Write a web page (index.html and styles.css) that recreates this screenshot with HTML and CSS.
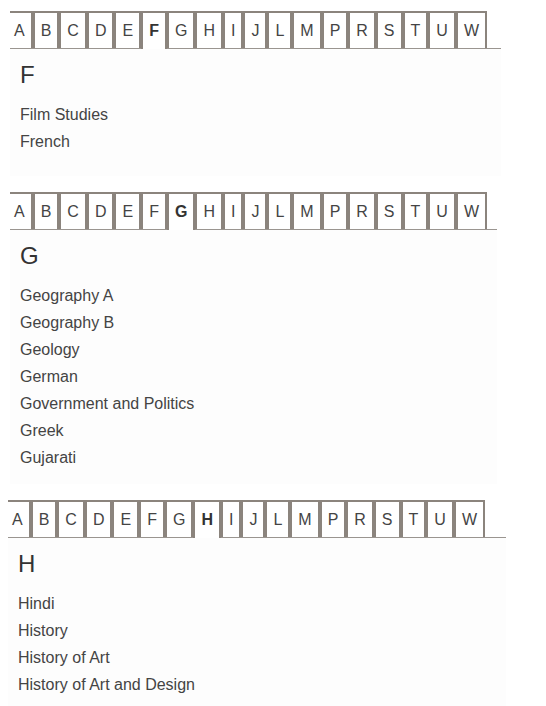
FILE: index.html
```html
<!DOCTYPE html>
<html lang="en">
<head>
    <meta charset="UTF-8">
    <meta name="viewport" content="width=device-width, initial-scale=1.0">
    <title>Subjects A-Z</title>
    <link rel="stylesheet" href="styles.css">
</head>
<body>

    <section class="letter-block block-f">
        <ul class="tabs">
            <li class="tab">A</li><li class="tab">B</li><li class="tab">C</li><li class="tab">D</li><li class="tab">E</li><li class="tab active">F</li><li class="tab">G</li><li class="tab">H</li><li class="tab">I</li><li class="tab">J</li><li class="tab">L</li><li class="tab">M</li><li class="tab">P</li><li class="tab">R</li><li class="tab">S</li><li class="tab">T</li><li class="tab">U</li><li class="tab">W</li>
        </ul>
        <div class="panel">
            <h2>F</h2>
            <ul class="subjects">
                <li>Film Studies</li>
                <li>French</li>
            </ul>
        </div>
    </section>

    <section class="letter-block block-g">
        <ul class="tabs">
            <li class="tab">A</li><li class="tab">B</li><li class="tab">C</li><li class="tab">D</li><li class="tab">E</li><li class="tab">F</li><li class="tab active">G</li><li class="tab">H</li><li class="tab">I</li><li class="tab">J</li><li class="tab">L</li><li class="tab">M</li><li class="tab">P</li><li class="tab">R</li><li class="tab">S</li><li class="tab">T</li><li class="tab">U</li><li class="tab">W</li>
        </ul>
        <div class="panel">
            <h2>G</h2>
            <ul class="subjects">
                <li>Geography A</li>
                <li>Geography B</li>
                <li>Geology</li>
                <li>German</li>
                <li>Government and Politics</li>
                <li>Greek</li>
                <li>Gujarati</li>
            </ul>
        </div>
    </section>

    <section class="letter-block block-h">
        <ul class="tabs">
            <li class="tab">A</li><li class="tab">B</li><li class="tab">C</li><li class="tab">D</li><li class="tab">E</li><li class="tab">F</li><li class="tab">G</li><li class="tab active">H</li><li class="tab">I</li><li class="tab">J</li><li class="tab">L</li><li class="tab">M</li><li class="tab">P</li><li class="tab">R</li><li class="tab">S</li><li class="tab">T</li><li class="tab">U</li><li class="tab">W</li>
        </ul>
        <div class="panel">
            <h2>H</h2>
            <ul class="subjects">
                <li>Hindi</li>
                <li>History</li>
                <li>History of Art</li>
                <li>History of Art and Design</li>
            </ul>
        </div>
    </section>

</body>
</html>
```

FILE: styles.css
```css
* {
    margin: 0;
    padding: 0;
    box-sizing: border-box;
}
body {
    background-color: #fff;
    font-family: "Liberation Sans", Arial, sans-serif;
    color: #444;
    padding-top: 11px;
}
.letter-block {
    margin: 0 0 16px 10px;
}
.block-f {
    width: 491px;
}
.block-g {
    width: 487px;
}
/* third block sits a touch further left */
.block-h {
    width: 498px;
    margin-left: 8px;
}
.tabs {
    list-style: none;
    display: flex;
    align-items: flex-start;
    border-bottom: 1px solid #9a9590;
}
.tab {
    font-size: 16px;
    line-height: 19px;
    padding: 8px 6px;
    border-top: 2px solid #8b847d;
    border-left: 2px solid #8b847d;
    border-right: 2px solid #8b847d;
    color: #444;
}
.tab:first-child {
    border-left: none;
    padding-left: 4px;
}
.tab.active {
    font-weight: bold;
    color: #333;
    background-color: #fff;
    margin-bottom: -1px;
    padding-bottom: 9px;
}
.panel {
    background-color: #fdfdfd;
    padding: 13px 10px 13px;
}
.block-f .panel {
    min-height: 127px;
}
.panel h2 {
    font-size: 24px;
    line-height: 26px;
    font-weight: normal;
    color: #333;
    margin-bottom: 13px;
}
.subjects {
    list-style: none;
}
.subjects li {
    font-size: 16px;
    line-height: 27px;
    color: #444;
}
```
